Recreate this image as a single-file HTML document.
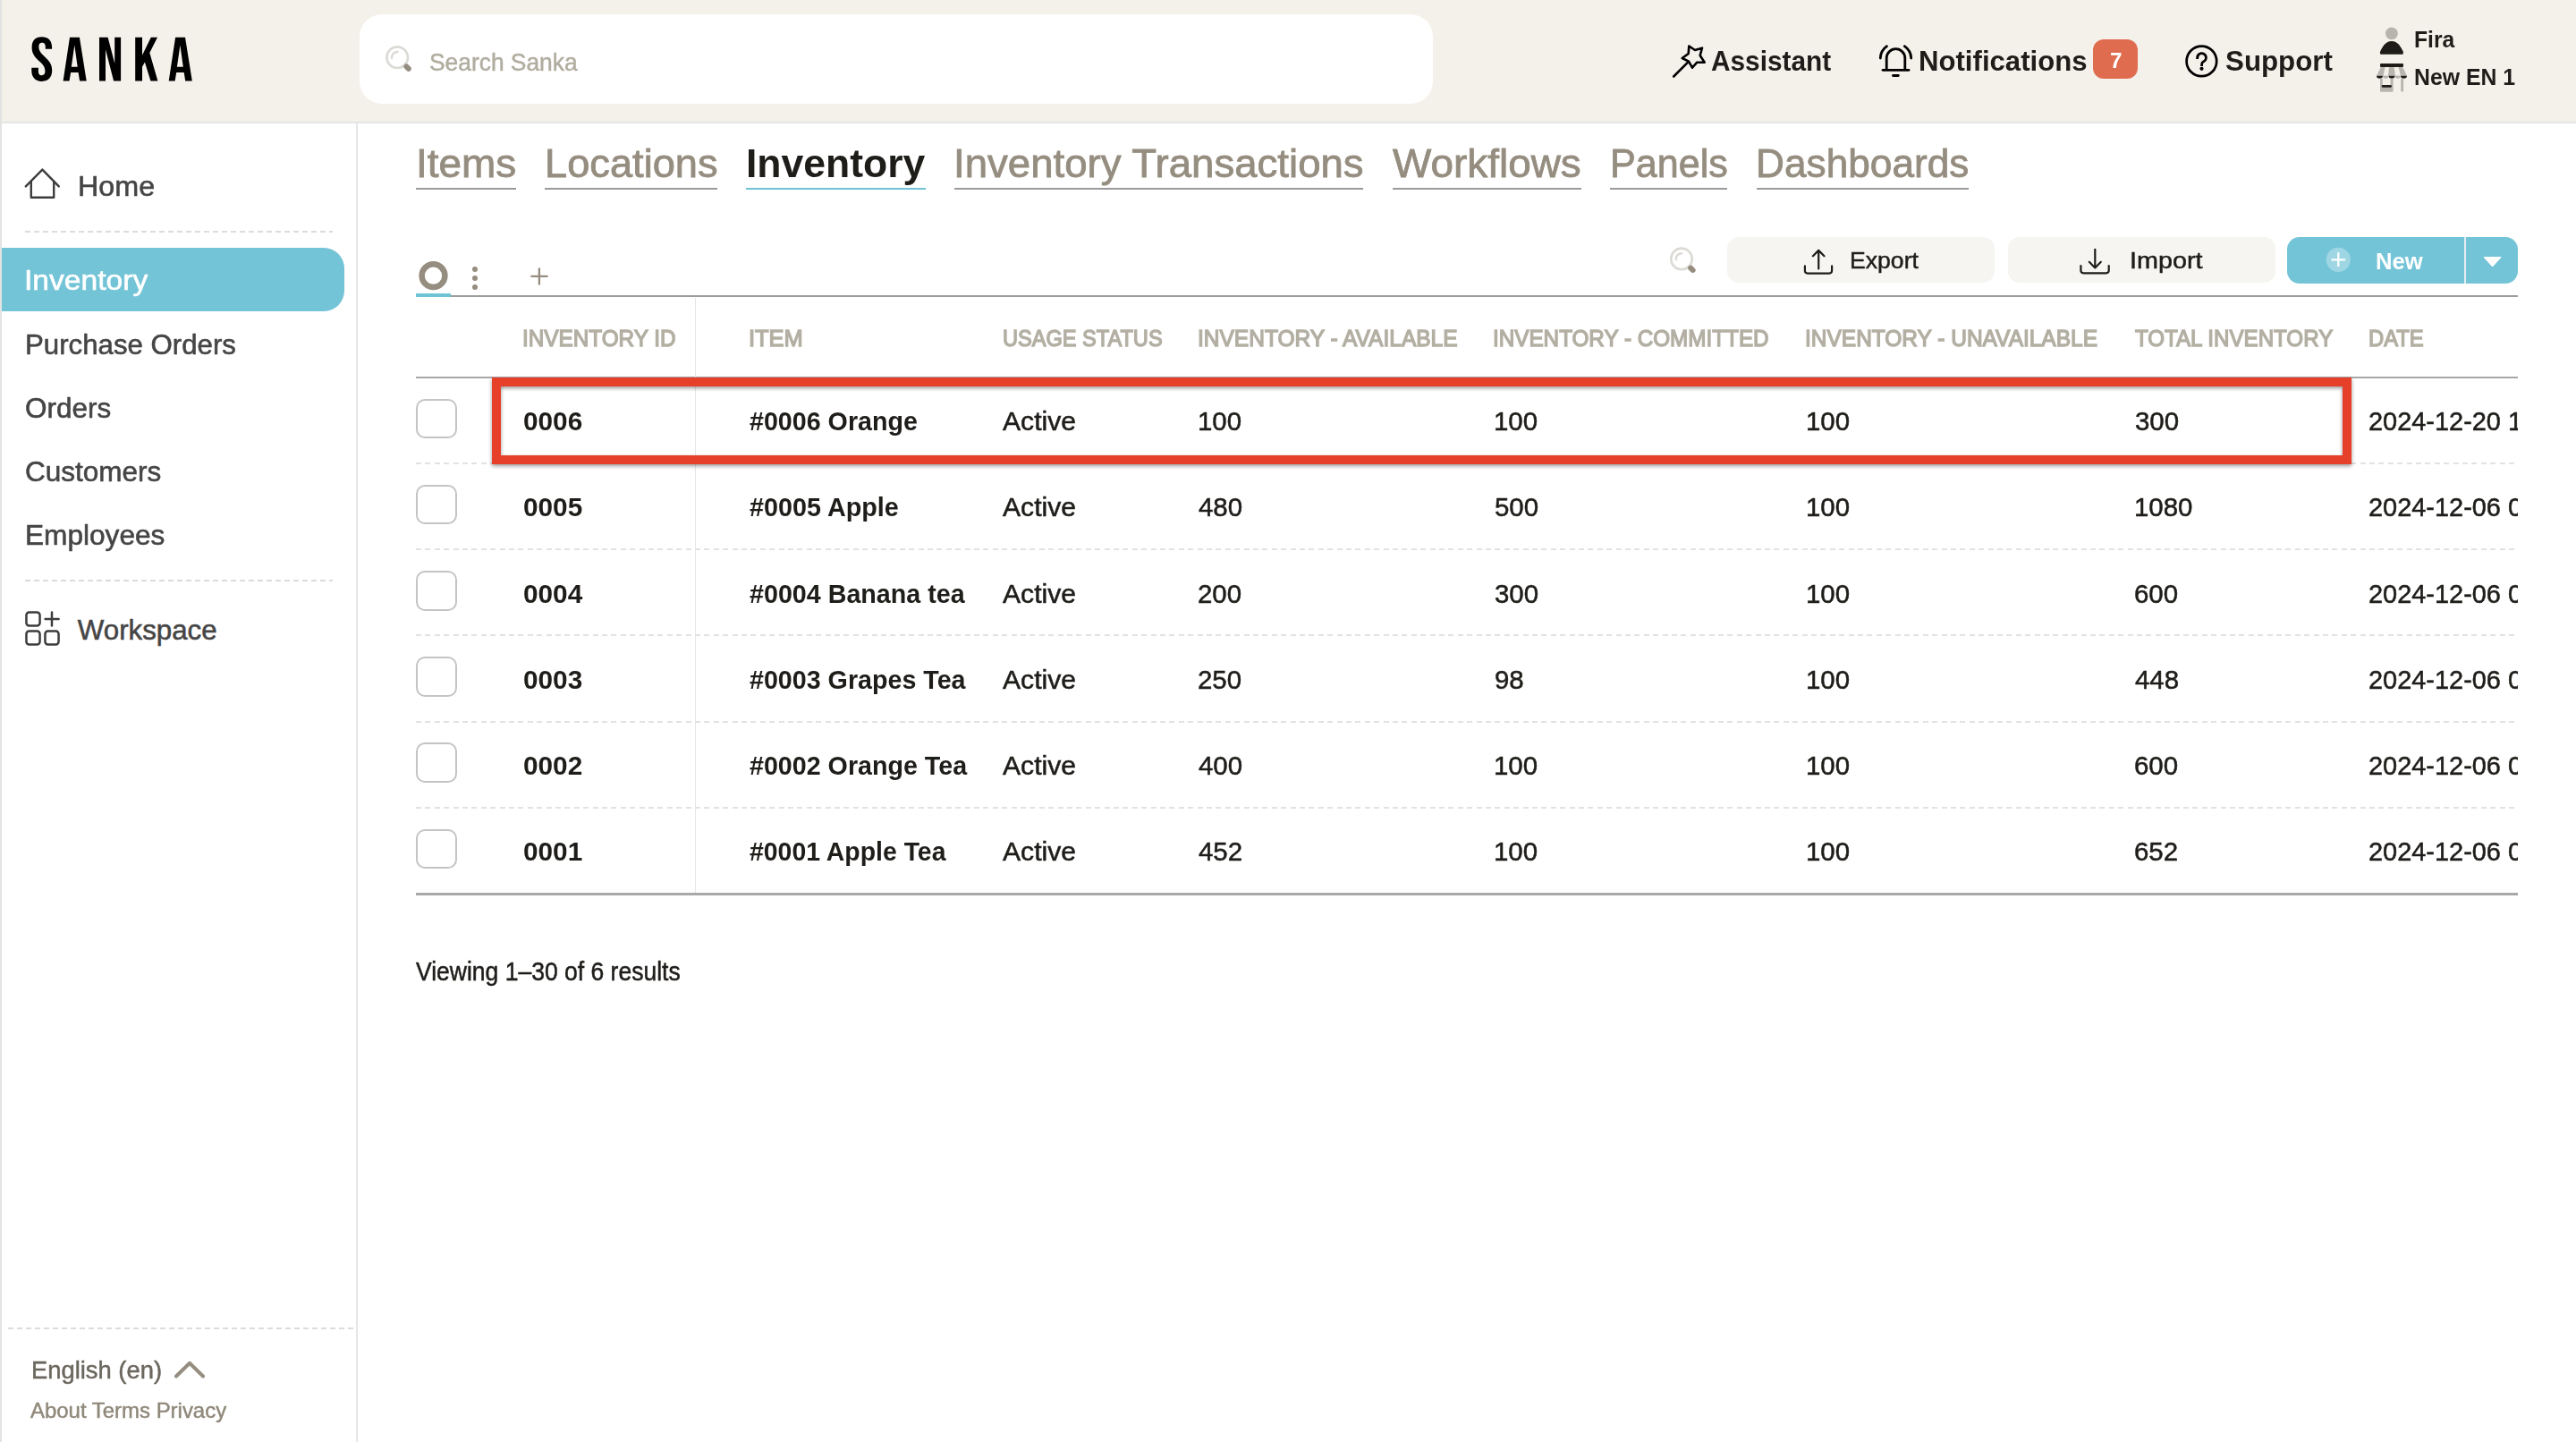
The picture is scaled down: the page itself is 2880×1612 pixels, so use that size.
<!DOCTYPE html>
<html><head><meta charset="utf-8"><style>
html,body{margin:0;padding:0;width:2880px;height:1612px;overflow:hidden;background:#fff}
body{position:relative;font-family:"Liberation Sans",sans-serif}
.t{position:absolute;line-height:1;white-space:pre;transform-origin:0 0}
.b{position:absolute;display:block}
</style></head><body>
<div class="b" style="left:0px;top:0px;width:2880px;height:136px;background:#f4f0ea"></div>
<div class="b" style="left:0px;top:136px;width:2880px;height:2px;background:#e6e6e6"></div>
<div class="b" style="left:0px;top:0px;width:2px;height:1612px;background:#e3e3e3"></div>
<svg class="b" style="left:35px;top:41px;" width="180" height="51" viewBox="0 0 180 51">
<path d="M11.6 0.2 C4.3 0.2 0.6 4.6 0.6 12 C0.6 18.3 3.2 22.2 9 27.4 C13.9 31.8 15.4 34.4 15.4 38.6 C15.4 42 14 43.2 11.7 43.2 C9.4 43.2 7.9 42 7.9 38.4 L7.9 34.8 L0.3 34.8 L0.3 37.8 C0.3 45.3 4.2 49.9 11.7 49.9 C19.3 49.9 23.2 45.3 23.2 37.6 C23.2 31.3 20.6 27.4 14.8 22.2 C9.9 17.8 8.4 15.4 8.4 11.3 C8.4 7.8 9.8 6.7 11.9 6.7 C14.2 6.7 15.8 8 15.8 11.5 L15.8 13.8 L23.1 13.8 L23.1 12 C23.1 4.6 19.2 0.2 11.6 0.2 Z" fill="#000"/>
<path d="M35.6 49.6 L43 0.7 L53.9 0.7 L61.7 49.6 L54.1 49.6 L52.6 40 L44.1 40 L42.5 49.6 Z M44.8 33.7 L51.7 33.7 L48.3 9.6 Z" fill="#000" fill-rule="evenodd"/>
<path d="M76 0.7 L85.6 0.7 L93.2 29.7 L93.2 0.7 L100.1 0.7 L100.1 49.6 L92.1 49.6 L83 14.3 L83 49.6 L76 49.6 Z" fill="#000"/>
<path d="M116.2 0.7 L124 0.7 L124 20.8 L133.8 0.7 L141 0.7 L132.3 18.1 L141.4 49.6 L133.4 49.6 L126.9 28.4 L124 33.7 L124 49.6 L116.2 49.6 Z" fill="#000"/>
<path d="M153.7 49.6 L161.1 0.7 L172 0.7 L179.8 49.6 L172.2 49.6 L170.7 40 L162.2 40 L160.6 49.6 Z M162.9 33.7 L169.8 33.7 L166.4 9.6 Z" fill="#000" fill-rule="evenodd"/>
</svg>
<div class="b" style="left:402px;top:16px;width:1200px;height:100px;background:#fff;border-radius:25px"></div>
<svg class="b" style="left:428px;top:48px;" width="40" height="40" viewBox="0 0 40 40"><circle cx="16.2" cy="16.2" r="11.8" fill="none" stroke="#dcdad5" stroke-width="2.6"/><path d="M10.0 17.0 A6.2 6.2 0 0 1 16.5 10.0" fill="none" stroke="#dcdad5" stroke-width="2.4" stroke-linecap="round"/><path d="M26.4 26.4 L28.8 28.8" stroke="#958d7f" stroke-width="6" stroke-linecap="round"/></svg>
<div class="t" style="left:479.96px;top:56.00px;font-size:28.05px;color:#b1ada0;-webkit-text-stroke:0.50px #b1ada0;transform:scaleX(0.9401);">Search Sanka</div>
<svg class="b" style="left:1866px;top:46px;" width="44" height="44" viewBox="0 0 44 44"><g fill="none" stroke="#000" stroke-width="2.6" stroke-linecap="round" stroke-linejoin="round"><path d="M5.2 39.5 L21.3 23.3"/><path d="M22.3 5.5 L29 10 L37 7.7 L34.7 16 L39.7 23.7 L31.3 23.7 L26 29.7 L22 22.7 L14.7 19 L21.7 14 Z"/></g></svg>
<div class="t" style="left:1913.06px;top:52.00px;font-size:31.98px;color:#1f1d1a;font-weight:700;transform:scaleX(0.9322);">Assistant</div>
<svg class="b" style="left:2094px;top:44px;" width="50" height="48" viewBox="0 0 50 48"><g fill="none" stroke="#000" stroke-width="2.8" stroke-linecap="round"><path d="M15.2 33.5 L15.2 21 A10.3 10.3 0 0 1 35.8 21 L35.8 33.5"/><path d="M11 34.3 L40 34.3"/><path d="M22.5 40.5 L28.3 40.5"/><path d="M15.5 7.7 A17 17 0 0 0 8.3 21"/><path d="M35.3 7.7 A17 17 0 0 1 42.7 21"/></g></svg>
<div class="t" style="left:2145.24px;top:52.00px;font-size:31.98px;color:#1f1d1a;font-weight:700;transform:scaleX(0.9738);">Notifications</div>
<div class="b" style="left:2340px;top:44px;width:50px;height:44px;background:#e06c50;border-radius:12px"></div>
<div class="t" style="left:2358.63px;top:57.00px;font-size:23.26px;color:#fff;font-weight:700;transform:scaleX(1.0412);">7</div>
<svg class="b" style="left:2436px;top:44px;" width="50" height="48" viewBox="0 0 50 48"><circle cx="25.4" cy="24.4" r="16.8" fill="none" stroke="#000" stroke-width="2.7"/><path d="M20.6 20.5 A4.9 4.9 0 1 1 27.3 25 Q25.6 25.8 25.6 28 L25.6 28.5" fill="none" stroke="#000" stroke-width="2.8" stroke-linecap="square"/><circle cx="25.5" cy="32.8" r="2.1" fill="#000"/></svg>
<div class="t" style="left:2488.25px;top:52.00px;font-size:32.27px;color:#1f1d1a;font-weight:700;transform:scaleX(0.9701);">Support</div>
<svg class="b" style="left:2650px;top:25px;" width="50" height="83" viewBox="0 0 50 83"><circle cx="23.9" cy="12.4" r="6.9" fill="#b8b5ae"/><path d="M11.5 35.7 C10.5 34.5 10.8 33 11.6 31.6 C14 27 17 21 23.9 21 C30.8 21 33.8 27 36.2 31.6 C37 33 37.3 34.5 36.3 35.7 Z" fill="#1e1c19"/><path d="M11.8 50 L36.2 50 L41 59.8 L7 59.8 Z" fill="#b8b5ae"/><path d="M16.5 50 L21 50 L20 59.8 L14.5 59.8 Z M26.5 50 L31.5 50 L34 59.8 L28 59.8 Z" fill="#f4f0ea"/><rect x="11" y="46" width="26" height="4" rx="1" fill="#1e1c19"/><path d="M7 59.8 L14 59.8 A3.5 3 0 0 1 7 59.8 Z M20.5 59.8 L27.5 59.8 A3.5 3 0 0 1 20.5 59.8 Z M34 59.8 L41 59.8 A3.5 3 0 0 1 34 59.8 Z" fill="#1e1c19"/><path d="M14 59.8 L20.5 59.8 A3.25 3 0 0 1 14 59.8 Z M27.5 59.8 L34 59.8 A3.25 3 0 0 1 27.5 59.8 Z" fill="#b8b5ae"/><path d="M11 62.7 L13.8 62.7 L13.8 70.5 L22.6 70.5 L22.6 62.7 L25.6 62.7 L25.6 76.5 Q25.6 77.7 24.4 77.7 L12.2 77.7 Q11 77.7 11 76.5 Z" fill="#b8b5ae"/><rect x="34.2" y="62.7" width="2.9" height="15" rx="1.4" fill="#b8b5ae"/><rect x="12.7" y="69.9" width="11.2" height="2.9" rx="1.4" fill="#1e1c19"/></svg>
<div class="t" style="left:2699.16px;top:31.00px;font-size:26.60px;color:#1f1d1a;font-weight:700;transform:scaleX(0.9269);">Fira</div>
<div class="t" style="left:2699.15px;top:73.00px;font-size:26.60px;color:#1f1d1a;font-weight:700;transform:scaleX(0.9331);">New EN 1</div>
<div class="b" style="left:398px;top:138px;width:2px;height:1474px;background:#e6e6e6"></div>
<svg class="b" style="left:20px;top:180px;" width="60" height="50" viewBox="0 0 60 50"><g fill="none" stroke="#3d3d3d" stroke-width="2.4" stroke-linecap="round" stroke-linejoin="round"><path d="M8.8 28.4 L27.4 9.6 L45.8 28.4"/><path d="M14.8 23 L14.8 40.8 L40.2 40.8 L40.2 23"/></g></svg>
<div class="t" style="left:86.52px;top:193.00px;font-size:30.52px;color:#454545;-webkit-text-stroke:0.55px #454545;transform:scaleX(1.0592);">Home</div>
<div class="b" style="left:28px;top:258px;width:344px;height:2px;background:repeating-linear-gradient(90deg,#dcdcdc 0 6px,transparent 6px 10px)"></div>
<div class="b" style="left:2px;top:277px;width:383px;height:71px;background:#74c4d7;border-radius:0 23px 23px 0"></div>
<div class="t" style="left:26.92px;top:297.00px;font-size:31.98px;color:#fff;-webkit-text-stroke:0.58px #fff;transform:scaleX(1.0512);">Inventory</div>
<div class="t" style="left:27.60px;top:369.00px;font-size:31.98px;color:#454545;-webkit-text-stroke:0.58px #454545;transform:scaleX(0.9762);">Purchase Orders</div>
<div class="t" style="left:27.85px;top:440.00px;font-size:31.98px;color:#454545;-webkit-text-stroke:0.58px #454545;transform:scaleX(0.9849);">Orders</div>
<div class="t" style="left:27.76px;top:511.00px;font-size:31.98px;color:#454545;-webkit-text-stroke:0.58px #454545;transform:scaleX(0.9859);">Customers</div>
<div class="t" style="left:27.57px;top:582.00px;font-size:31.98px;color:#454545;-webkit-text-stroke:0.58px #454545;transform:scaleX(0.9888);">Employees</div>
<div class="b" style="left:28px;top:648px;width:344px;height:2px;background:repeating-linear-gradient(90deg,#dcdcdc 0 6px,transparent 6px 10px)"></div>
<svg class="b" style="left:20px;top:675px;" width="60" height="55" viewBox="0 0 60 55"><g fill="none" stroke="#3d3d3d" stroke-width="2.5" stroke-linecap="round"><rect x="9.45" y="9.45" width="15.1" height="15.1" rx="3.2"/><rect x="9.45" y="30.45" width="15.1" height="15.1" rx="3.2"/><rect x="30.45" y="30.45" width="15.1" height="15.1" rx="3.2"/><path d="M38 9.6 L38 24.4 M30.6 17 L45.6 17"/></g></svg>
<div class="t" style="left:86.85px;top:689.00px;font-size:31.25px;color:#454545;-webkit-text-stroke:0.56px #454545;">Workspace</div>
<div class="b" style="left:9px;top:1484px;width:387px;height:2px;background:repeating-linear-gradient(90deg,#dcdcdc 0 6px,transparent 6px 10px)"></div>
<div class="t" style="left:34.60px;top:1517.00px;font-size:28.34px;color:#6b675e;-webkit-text-stroke:0.51px #6b675e;transform:scaleX(0.9660);">English (en)</div>
<svg class="b" style="left:190px;top:1514px;" width="44" height="32" viewBox="0 0 44 32"><path d="M7 24.5 L22 9.8 L37 24.5" fill="none" stroke="#958d7f" stroke-width="4" stroke-linecap="round" stroke-linejoin="round"/></svg>
<div class="t" style="left:34.09px;top:1565.00px;font-size:24.71px;color:#8f887a;-webkit-text-stroke:0.44px #8f887a;transform:scaleX(0.9693);">About Terms Privacy</div>
<div class="t" style="left:464.67px;top:160.00px;font-size:45.06px;color:#958d7f;-webkit-text-stroke:0.81px #958d7f;transform:scaleX(1.0192);">Items</div>
<div class="b" style="left:465px;top:210px;width:112px;height:2px;background:#9a9a9a"></div>
<div class="t" style="left:608.89px;top:160.00px;font-size:45.06px;color:#958d7f;-webkit-text-stroke:0.81px #958d7f;transform:scaleX(1.0040);">Locations</div>
<div class="b" style="left:609px;top:210px;width:193px;height:2px;background:#9a9a9a"></div>
<div class="t" style="left:834.09px;top:160.00px;font-size:45.06px;color:#1f1d1a;font-weight:700;transform:scaleX(0.9879);">Inventory</div>
<div class="b" style="left:834px;top:210px;width:201px;height:2px;background:#6ec4d6"></div>
<div class="t" style="left:1066.30px;top:160.00px;font-size:45.06px;color:#958d7f;-webkit-text-stroke:0.81px #958d7f;transform:scaleX(1.0120);">Inventory Transactions</div>
<div class="b" style="left:1067px;top:210px;width:457px;height:2px;background:#9a9a9a"></div>
<div class="t" style="left:1557.28px;top:160.00px;font-size:45.06px;color:#958d7f;-webkit-text-stroke:0.81px #958d7f;transform:scaleX(1.0184);">Workflows</div>
<div class="b" style="left:1557px;top:210px;width:211px;height:2px;background:#9a9a9a"></div>
<div class="t" style="left:1800.17px;top:160.00px;font-size:45.06px;color:#958d7f;-webkit-text-stroke:0.81px #958d7f;transform:scaleX(0.9566);">Panels</div>
<div class="b" style="left:1800px;top:210px;width:131px;height:2px;background:#9a9a9a"></div>
<div class="t" style="left:1963.47px;top:160.00px;font-size:45.06px;color:#958d7f;-webkit-text-stroke:0.81px #958d7f;transform:scaleX(0.9817);">Dashboards</div>
<div class="b" style="left:1964px;top:210px;width:237px;height:2px;background:#9a9a9a"></div>
<svg class="b" style="left:462px;top:286px;" width="46" height="46" viewBox="0 0 46 46"><circle cx="22.5" cy="22.2" r="12.9" fill="none" stroke="#958d7f" stroke-width="6.5"/></svg>
<div class="b" style="left:465px;top:328px;width:39px;height:4px;background:#6ec4d6"></div>
<div class="b" style="left:504px;top:330px;width:2311px;height:2px;background:#9c9c9c"></div>
<svg class="b" style="left:520px;top:290px;" width="22" height="40" viewBox="0 0 22 40"><g fill="#958d7f"><circle cx="11" cy="11" r="3"/><circle cx="11" cy="21" r="3"/><circle cx="11" cy="31" r="3"/></g></svg>
<svg class="b" style="left:585px;top:291px;" width="36" height="36" viewBox="0 0 36 36"><path d="M17.9 9.45 L17.9 26.65 M9.35 17.9 L26.65 17.9" stroke="#958d7f" stroke-width="2.3" stroke-linecap="round"/></svg>
<svg class="b" style="left:1860px;top:270px;" width="40" height="40" viewBox="0 0 40 40"><circle cx="20" cy="19.4" r="11.8" fill="none" stroke="#dcdad5" stroke-width="2.6"/><path d="M13.8 20.2 A6.2 6.2 0 0 1 20.3 13.2" fill="none" stroke="#dcdad5" stroke-width="2.4" stroke-linecap="round"/><path d="M30.2 29.6 L32.6 32.0" stroke="#958d7f" stroke-width="6" stroke-linecap="round"/></svg>
<div class="b" style="left:1931px;top:265px;width:299px;height:51px;background:#f6f5f1;border-radius:13px"></div>
<svg class="b" style="left:2010px;top:270px;" width="45" height="45" viewBox="0 0 45 45"><g fill="none" stroke="#1f1d1a" stroke-width="2.2" stroke-linecap="round" stroke-linejoin="round"><path d="M23.2 10 L23.2 30.5 M16.9 16.2 L23.2 9.9 L29.5 16.2"/><path d="M7.9 27.4 L7.9 32.6 Q7.9 35.6 10.9 35.6 L35.1 35.6 Q38.1 35.6 38.1 32.6 L38.1 27.4"/></g></svg>
<div class="t" style="left:2067.91px;top:279.00px;font-size:25.44px;color:#1f1d1a;-webkit-text-stroke:0.46px #1f1d1a;transform:scaleX(1.0462);">Export</div>
<div class="b" style="left:2244.5px;top:265px;width:299px;height:51px;background:#f6f5f1;border-radius:13px"></div>
<svg class="b" style="left:2319px;top:270px;" width="45" height="45" viewBox="0 0 45 45"><g fill="none" stroke="#1f1d1a" stroke-width="2.2" stroke-linecap="round" stroke-linejoin="round"><path d="M23.3 8.8 L23.3 29.4 M16.8 22.8 L23.3 29.4 L29.8 22.8"/><path d="M7.4 27 L7.4 32.3 Q7.4 35.3 10.4 35.3 L35.7 35.3 Q38.7 35.3 38.7 32.3 L38.7 27"/></g></svg>
<div class="t" style="left:2380.80px;top:279.00px;font-size:25.44px;color:#1f1d1a;-webkit-text-stroke:0.46px #1f1d1a;transform:scaleX(1.1300);">Import</div>
<div class="b" style="left:2557px;top:265px;width:258px;height:52px;background:#74c4d8;border-radius:14px"></div>
<div class="b" style="left:2755px;top:265px;width:2px;height:52px;background:#e4eef0"></div>
<svg class="b" style="left:2597px;top:273px;" width="36" height="36" viewBox="0 0 36 36"><circle cx="17.3" cy="17.3" r="13.6" fill="rgba(255,255,255,0.3)"/><path d="M17.3 9.3 L17.3 25 M9.5 17.3 L25.1 17.3" stroke="#fff" stroke-width="2.2"/></svg>
<div class="t" style="left:2656.29px;top:279.00px;font-size:26.16px;color:#fff;font-weight:700;transform:scaleX(0.9800);">New</div>
<svg class="b" style="left:2770px;top:280px;" width="32" height="24" viewBox="0 0 32 24"><path d="M7.5 7 L25.8 7 Q27 7 26.2 8 L17.6 17.5 Q16.6 18.5 15.6 17.5 L7 8 Q6.3 7 7.5 7 Z" fill="#fff"/></svg>
<div class="t" style="left:584.41px;top:365.00px;font-size:26.02px;color:#b3afa3;-webkit-text-stroke:0.47px #b3afa3;transform:scaleX(0.9343);-webkit-text-stroke:1.4px #b3afa3;">INVENTORY ID</div>
<div class="t" style="left:837.31px;top:365.00px;font-size:26.02px;color:#b3afa3;-webkit-text-stroke:0.47px #b3afa3;transform:scaleX(0.9768);-webkit-text-stroke:1.4px #b3afa3;">ITEM</div>
<div class="t" style="left:1120.77px;top:365.00px;font-size:26.02px;color:#b3afa3;-webkit-text-stroke:0.47px #b3afa3;transform:scaleX(0.9064);-webkit-text-stroke:1.4px #b3afa3;">USAGE STATUS</div>
<div class="t" style="left:1338.79px;top:365.00px;font-size:26.02px;color:#b3afa3;-webkit-text-stroke:0.47px #b3afa3;transform:scaleX(0.9420);-webkit-text-stroke:1.4px #b3afa3;">INVENTORY - AVAILABLE</div>
<div class="t" style="left:1669.42px;top:365.00px;font-size:26.02px;color:#b3afa3;-webkit-text-stroke:0.47px #b3afa3;transform:scaleX(0.9323);-webkit-text-stroke:1.4px #b3afa3;">INVENTORY - COMMITTED</div>
<div class="t" style="left:2018.40px;top:365.00px;font-size:26.02px;color:#b3afa3;-webkit-text-stroke:0.47px #b3afa3;transform:scaleX(0.9410);-webkit-text-stroke:1.4px #b3afa3;">INVENTORY - UNAVAILABLE</div>
<div class="t" style="left:2386.84px;top:365.00px;font-size:26.02px;color:#b3afa3;-webkit-text-stroke:0.47px #b3afa3;transform:scaleX(0.9274);-webkit-text-stroke:1.4px #b3afa3;">TOTAL INVENTORY</div>
<div class="t" style="left:2647.67px;top:365.00px;font-size:26.02px;color:#b3afa3;-webkit-text-stroke:0.47px #b3afa3;transform:scaleX(0.9140);-webkit-text-stroke:1.4px #b3afa3;">DATE</div>
<div class="b" style="left:465px;top:421px;width:2350px;height:2px;background:#a8a8a8"></div>
<div class="b" style="left:777px;top:333px;width:1px;height:666px;background:#e6e6e6"></div>
<div class="b" style="left:465px;top:445.6px;width:45.5px;height:44.5px;box-sizing:border-box;border:2.2px solid #c4c4c4;border-radius:10px;background:#fff"></div>
<div class="t" style="left:584.72px;top:457.00px;font-size:29.07px;color:#1f1d1a;font-weight:700;transform:scaleX(1.0241);">0006</div>
<div class="t" style="left:838.48px;top:457.00px;font-size:29.07px;color:#1f1d1a;font-weight:700;transform:scaleX(0.9855);">#0006 Orange</div>
<div class="t" style="left:1120.64px;top:457.00px;font-size:29.07px;color:#1f1d1a;-webkit-text-stroke:0.52px #1f1d1a;transform:scaleX(1.0360);">Active</div>
<div class="t" style="left:1338.69px;top:457.00px;font-size:29.07px;color:#1f1d1a;-webkit-text-stroke:0.52px #1f1d1a;transform:scaleX(1.0116);">100</div>
<div class="t" style="left:1669.69px;top:457.00px;font-size:29.07px;color:#1f1d1a;-webkit-text-stroke:0.52px #1f1d1a;transform:scaleX(1.0116);">100</div>
<div class="t" style="left:2018.69px;top:457.00px;font-size:29.07px;color:#1f1d1a;-webkit-text-stroke:0.52px #1f1d1a;transform:scaleX(1.0116);">100</div>
<div class="t" style="left:2386.61px;top:457.00px;font-size:29.07px;color:#1f1d1a;-webkit-text-stroke:0.52px #1f1d1a;transform:scaleX(1.0116);">300</div>
<div class="t" style="left:2647.91px;top:457.00px;font-size:29.07px;color:#1f1d1a;-webkit-text-stroke:0.52px #1f1d1a;transform:scaleX(0.9951);">2024-12-20 1</div>
<div class="b" style="left:465px;top:517px;width:2350px;height:2px;background:repeating-linear-gradient(90deg,#e2e2e2 0 6px,transparent 6px 10.4px)"></div>
<div class="b" style="left:465px;top:541.8px;width:45.5px;height:44.5px;box-sizing:border-box;border:2.2px solid #c4c4c4;border-radius:10px;background:#fff"></div>
<div class="t" style="left:584.72px;top:553.00px;font-size:29.07px;color:#1f1d1a;font-weight:700;transform:scaleX(1.0241);">0005</div>
<div class="t" style="left:838.48px;top:553.00px;font-size:29.07px;color:#1f1d1a;font-weight:700;transform:scaleX(0.9896);">#0005 Apple</div>
<div class="t" style="left:1120.64px;top:553.00px;font-size:29.07px;color:#1f1d1a;-webkit-text-stroke:0.52px #1f1d1a;transform:scaleX(1.0360);">Active</div>
<div class="t" style="left:1340.31px;top:553.00px;font-size:29.07px;color:#1f1d1a;-webkit-text-stroke:0.52px #1f1d1a;transform:scaleX(1.0116);">480</div>
<div class="t" style="left:1670.52px;top:553.00px;font-size:29.07px;color:#1f1d1a;-webkit-text-stroke:0.52px #1f1d1a;transform:scaleX(1.0116);">500</div>
<div class="t" style="left:2018.69px;top:553.00px;font-size:29.07px;color:#1f1d1a;-webkit-text-stroke:0.52px #1f1d1a;transform:scaleX(1.0116);">100</div>
<div class="t" style="left:2385.69px;top:553.00px;font-size:29.07px;color:#1f1d1a;-webkit-text-stroke:0.52px #1f1d1a;transform:scaleX(1.0116);">1080</div>
<div class="t" style="left:2647.91px;top:553.00px;font-size:29.07px;color:#1f1d1a;-webkit-text-stroke:0.52px #1f1d1a;transform:scaleX(0.9951);">2024-12-06 0</div>
<div class="b" style="left:465px;top:613px;width:2350px;height:2px;background:repeating-linear-gradient(90deg,#e2e2e2 0 6px,transparent 6px 10.4px)"></div>
<div class="b" style="left:465px;top:638.0px;width:45.5px;height:44.5px;box-sizing:border-box;border:2.2px solid #c4c4c4;border-radius:10px;background:#fff"></div>
<div class="t" style="left:584.72px;top:650.00px;font-size:29.07px;color:#1f1d1a;font-weight:700;transform:scaleX(1.0241);">0004</div>
<div class="t" style="left:838.48px;top:650.00px;font-size:29.07px;color:#1f1d1a;font-weight:700;transform:scaleX(0.9864);">#0004 Banana tea</div>
<div class="t" style="left:1120.64px;top:650.00px;font-size:29.07px;color:#1f1d1a;-webkit-text-stroke:0.52px #1f1d1a;transform:scaleX(1.0360);">Active</div>
<div class="t" style="left:1339.48px;top:650.00px;font-size:29.07px;color:#1f1d1a;-webkit-text-stroke:0.52px #1f1d1a;transform:scaleX(1.0116);">200</div>
<div class="t" style="left:1670.61px;top:650.00px;font-size:29.07px;color:#1f1d1a;-webkit-text-stroke:0.52px #1f1d1a;transform:scaleX(1.0116);">300</div>
<div class="t" style="left:2018.69px;top:650.00px;font-size:29.07px;color:#1f1d1a;-webkit-text-stroke:0.52px #1f1d1a;transform:scaleX(1.0116);">100</div>
<div class="t" style="left:2386.48px;top:650.00px;font-size:29.07px;color:#1f1d1a;-webkit-text-stroke:0.52px #1f1d1a;transform:scaleX(1.0116);">600</div>
<div class="t" style="left:2647.91px;top:650.00px;font-size:29.07px;color:#1f1d1a;-webkit-text-stroke:0.52px #1f1d1a;transform:scaleX(0.9951);">2024-12-06 0</div>
<div class="b" style="left:465px;top:709px;width:2350px;height:2px;background:repeating-linear-gradient(90deg,#e2e2e2 0 6px,transparent 6px 10.4px)"></div>
<div class="b" style="left:465px;top:734.2px;width:45.5px;height:44.5px;box-sizing:border-box;border:2.2px solid #c4c4c4;border-radius:10px;background:#fff"></div>
<div class="t" style="left:584.72px;top:746.00px;font-size:29.07px;color:#1f1d1a;font-weight:700;transform:scaleX(1.0241);">0003</div>
<div class="t" style="left:838.48px;top:746.00px;font-size:29.07px;color:#1f1d1a;font-weight:700;transform:scaleX(0.9855);">#0003 Grapes Tea</div>
<div class="t" style="left:1120.64px;top:746.00px;font-size:29.07px;color:#1f1d1a;-webkit-text-stroke:0.52px #1f1d1a;transform:scaleX(1.0360);">Active</div>
<div class="t" style="left:1339.48px;top:746.00px;font-size:29.07px;color:#1f1d1a;-webkit-text-stroke:0.52px #1f1d1a;transform:scaleX(1.0116);">250</div>
<div class="t" style="left:1670.57px;top:746.00px;font-size:29.07px;color:#1f1d1a;-webkit-text-stroke:0.52px #1f1d1a;transform:scaleX(1.0116);">98</div>
<div class="t" style="left:2018.69px;top:746.00px;font-size:29.07px;color:#1f1d1a;-webkit-text-stroke:0.52px #1f1d1a;transform:scaleX(1.0116);">100</div>
<div class="t" style="left:2387.31px;top:746.00px;font-size:29.07px;color:#1f1d1a;-webkit-text-stroke:0.52px #1f1d1a;transform:scaleX(1.0116);">448</div>
<div class="t" style="left:2647.91px;top:746.00px;font-size:29.07px;color:#1f1d1a;-webkit-text-stroke:0.52px #1f1d1a;transform:scaleX(0.9951);">2024-12-06 0</div>
<div class="b" style="left:465px;top:806px;width:2350px;height:2px;background:repeating-linear-gradient(90deg,#e2e2e2 0 6px,transparent 6px 10.4px)"></div>
<div class="b" style="left:465px;top:830.4px;width:45.5px;height:44.5px;box-sizing:border-box;border:2.2px solid #c4c4c4;border-radius:10px;background:#fff"></div>
<div class="t" style="left:584.72px;top:842.00px;font-size:29.07px;color:#1f1d1a;font-weight:700;transform:scaleX(1.0241);">0002</div>
<div class="t" style="left:838.48px;top:842.00px;font-size:29.07px;color:#1f1d1a;font-weight:700;transform:scaleX(0.9855);">#0002 Orange Tea</div>
<div class="t" style="left:1120.64px;top:842.00px;font-size:29.07px;color:#1f1d1a;-webkit-text-stroke:0.52px #1f1d1a;transform:scaleX(1.0360);">Active</div>
<div class="t" style="left:1340.31px;top:842.00px;font-size:29.07px;color:#1f1d1a;-webkit-text-stroke:0.52px #1f1d1a;transform:scaleX(1.0116);">400</div>
<div class="t" style="left:1669.69px;top:842.00px;font-size:29.07px;color:#1f1d1a;-webkit-text-stroke:0.52px #1f1d1a;transform:scaleX(1.0116);">100</div>
<div class="t" style="left:2018.69px;top:842.00px;font-size:29.07px;color:#1f1d1a;-webkit-text-stroke:0.52px #1f1d1a;transform:scaleX(1.0116);">100</div>
<div class="t" style="left:2386.48px;top:842.00px;font-size:29.07px;color:#1f1d1a;-webkit-text-stroke:0.52px #1f1d1a;transform:scaleX(1.0116);">600</div>
<div class="t" style="left:2647.91px;top:842.00px;font-size:29.07px;color:#1f1d1a;-webkit-text-stroke:0.52px #1f1d1a;transform:scaleX(0.9951);">2024-12-06 0</div>
<div class="b" style="left:465px;top:902px;width:2350px;height:2px;background:repeating-linear-gradient(90deg,#e2e2e2 0 6px,transparent 6px 10.4px)"></div>
<div class="b" style="left:465px;top:926.6px;width:45.5px;height:44.5px;box-sizing:border-box;border:2.2px solid #c4c4c4;border-radius:10px;background:#fff"></div>
<div class="t" style="left:584.72px;top:938.00px;font-size:29.07px;color:#1f1d1a;font-weight:700;transform:scaleX(1.0241);">0001</div>
<div class="t" style="left:838.48px;top:938.00px;font-size:29.07px;color:#1f1d1a;font-weight:700;transform:scaleX(0.9774);">#0001 Apple Tea</div>
<div class="t" style="left:1120.64px;top:938.00px;font-size:29.07px;color:#1f1d1a;-webkit-text-stroke:0.52px #1f1d1a;transform:scaleX(1.0360);">Active</div>
<div class="t" style="left:1340.31px;top:938.00px;font-size:29.07px;color:#1f1d1a;-webkit-text-stroke:0.52px #1f1d1a;transform:scaleX(1.0116);">452</div>
<div class="t" style="left:1669.69px;top:938.00px;font-size:29.07px;color:#1f1d1a;-webkit-text-stroke:0.52px #1f1d1a;transform:scaleX(1.0116);">100</div>
<div class="t" style="left:2018.69px;top:938.00px;font-size:29.07px;color:#1f1d1a;-webkit-text-stroke:0.52px #1f1d1a;transform:scaleX(1.0116);">100</div>
<div class="t" style="left:2386.48px;top:938.00px;font-size:29.07px;color:#1f1d1a;-webkit-text-stroke:0.52px #1f1d1a;transform:scaleX(1.0116);">652</div>
<div class="t" style="left:2647.91px;top:938.00px;font-size:29.07px;color:#1f1d1a;-webkit-text-stroke:0.52px #1f1d1a;transform:scaleX(0.9951);">2024-12-06 0</div>
<div class="b" style="left:465px;top:998px;width:2350px;height:2.5px;background:#a8a8a8"></div>
<div class="b" style="left:2815px;top:400px;width:65px;height:620px;background:#fff"></div>
<div class="b" style="left:550px;top:422px;width:2079px;height:97px;box-sizing:border-box;border:10px solid #e7402a;filter:drop-shadow(0 2px 2px rgba(0,0,0,.4))"></div>
<div class="t" style="left:464.65px;top:1072.00px;font-size:29.07px;color:#1f1d1a;-webkit-text-stroke:0.52px #1f1d1a;transform:scaleX(0.9119);">Viewing 1–30 of 6 results</div>
</body></html>
